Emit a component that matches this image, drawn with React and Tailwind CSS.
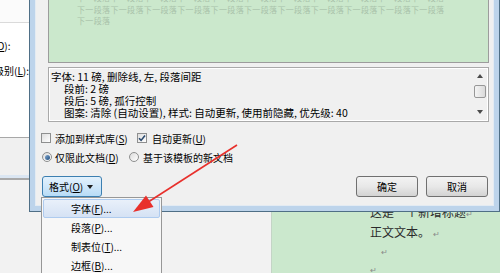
import React from 'react';

const FONT = "font-['Noto_Sans_CJK_SC','Noto_Sans',sans-serif]";

const U = ({ children }) => <span className="underline underline-offset-1">{children}</span>;

const Check = ({ checked }) => (
    <span className="w-[10px] h-[10px] border border-[#8e8f8f] bg-gradient-to-br from-[#dedede] to-white flex items-center justify-center shrink-0">
        {checked && (
            <svg width="8" height="8" viewBox="0 0 8 8">
                <path d="M1 4.2 L3.1 6.4 L7 1.4" fill="none" stroke="#2b4a6e" strokeWidth="1.6" />
            </svg>
        )}
    </span>
);

const Radio = ({ checked }) => (
    <span className="w-[10px] h-[10px] rounded-full border border-[#8e8f8f] bg-gradient-to-br from-[#dcdcdc] to-white flex items-center justify-center shrink-0">
        {checked && <span className="w-[5px] h-[5px] rounded-full bg-gradient-to-br from-[#7fa6cf] to-[#23507f]" />}
    </span>
);

const previewLine = '下一段落'.repeat(11);

const App = () => {
    return (
        <div className={`relative w-[500px] h-[273px] overflow-hidden bg-[#f1f1f1] ${FONT} text-black`}>
            {/* background: style pane + document page */}
            <div className="flex h-full">
                <div className="w-[271px] flex flex-col">
                    <div className="h-[23px] bg-[#fbfbfb] border-b border-[#dadada]" />
                    <div className="h-[115px] bg-white border-b border-[#a8a8a8] text-[10px] leading-[12px] pt-[17px]">
                        <div className="-ml-[6px] whitespace-nowrap">(<U>D</U>):</div>
                        <div className="-ml-[6px] mt-[13px] whitespace-nowrap">级别(<U>L</U>):</div>
                    </div>
                    <div className="h-[37px] bg-[#f0f0f0]" />
                    <div className="h-[3px] bg-[#dbe6f2]" />
                    <div className="h-[2px] bg-[#a9a9a9]" />
                    <div className="flex-1 bg-[#f2f2f2]" />
                </div>
                <div className="flex-1 bg-[#cbe8cd] border-l border-[#c4d4c6] pl-[98px] pt-[203px] text-[12px] leading-[18px] text-[#2a2a2a]">
                    <div className="whitespace-nowrap">这是一个新增标题<span className="text-[8px] text-[#8a8a8a]">↵</span></div>
                    <div className="whitespace-nowrap">正文文本。<span className="text-[8px] text-[#8a8a8a] ml-[3px]">↵</span></div>
                    <div className="pl-[11px] text-[8px] text-[#8a8a8a]">↵</div>
                    <div className="text-[8px] text-[#8a8a8a]">↵</div>
                </div>
            </div>

            {/* style dialog window */}
            <div className="absolute left-[29px] top-0 w-[471px] h-[212px] border-x border-b border-[#4f6f86] bg-[#bdd4eb] px-[5px] pb-[5px]">
                <div className="h-full border-x border-b border-[#e3ebf3] bg-[#f0f0f0] flex flex-col">
                    {/* preview */}
                    <div className="ml-[12px] w-[441px] h-[63px] bg-[#cbe8cc] border-x border-b border-[#9c9c9c] overflow-hidden">
                        <div className="-mt-[8px] pl-[28px] text-[8px] leading-[11.5px] tracking-[0.35px] text-[#a9c2aa] whitespace-nowrap">
                            <div>{previewLine}</div>
                            <div>{previewLine}</div>
                            <div>下一段落</div>
                        </div>
                    </div>

                    {/* description */}
                    <div className="ml-[12px] mt-[4px] w-[441px] h-[55px] border border-[#a9a9a9]">
                        <div className="h-full border border-white flex">
                            <div className="flex-1 pl-[1px] pt-[2px] text-[10.5px] leading-[12px] whitespace-nowrap">
                                <div>字体: 11 磅, 删除线, 左, 段落间距</div>
                                <div className="pl-[13px]">段前: 2 磅</div>
                                <div className="pl-[13px]">段后: 5 磅, 孤行控制</div>
                                <div className="pl-[13px]">图案: 清除 (自动设置), 样式: 自动更新, 使用前隐藏, 优先级: 40</div>
                            </div>
                            <div className="w-[13px] mr-[1px] flex flex-col items-center">
                                <span className="mt-[5px] w-0 h-0 border-x-[3px] border-x-transparent border-b-[4px] border-b-[#4a4a4a]" />
                                <span className="mt-[7px] w-[12px] h-[13px] rounded-[2px] border border-[#979797] bg-gradient-to-r from-[#f4f4f4] to-[#dadada]" />
                                <span className="mt-[12px] w-0 h-0 border-x-[3px] border-x-transparent border-t-[4px] border-t-[#4a4a4a]" />
                            </div>
                        </div>
                    </div>

                    {/* checkboxes */}
                    <div className="mt-[9px] pl-[5px] h-[14px] flex items-center text-[10px] whitespace-nowrap">
                        <div className="w-[96px] flex items-center gap-[4px]">
                            <Check />
                            <span>添加到样式库(<U>S</U>)</span>
                        </div>
                        <div className="flex items-center gap-[5px]">
                            <Check checked />
                            <span>自动更新(<U>U</U>)</span>
                        </div>
                    </div>

                    {/* radios */}
                    <div className="mt-[5px] pl-[6px] h-[14px] flex items-center text-[10px] whitespace-nowrap">
                        <div className="w-[87px] flex items-center gap-[3px]">
                            <Radio checked />
                            <span>仅限此文档(<U>D</U>)</span>
                        </div>
                        <div className="flex items-center gap-[4px]">
                            <Radio />
                            <span>基于该模板的新文档</span>
                        </div>
                    </div>

                    {/* buttons */}
                    <div className="mt-[12px] pl-[6px] pr-[5px] flex items-start text-[10px]">
                        <div className="w-[60px] h-[21px] rounded-[3px] border border-[#3c7fb1] bg-gradient-to-b from-[#e3f1fc] via-[#cfe7fa] to-[#b8dcf6] flex items-center pl-[6px] gap-[4px] whitespace-nowrap">
                            <span>格式(<U>O</U>)</span>
                            <span className="w-0 h-0 border-x-[3px] border-x-transparent border-t-[4px] border-t-[#1e1e1e]" />
                        </div>
                        <div className="ml-auto flex gap-[8px]">
                            <div className="w-[62px] h-[21px] rounded-[3px] border border-[#707070] bg-gradient-to-b from-[#f3f3f3] via-[#e8e8e8] to-[#d3d3d3] flex items-center justify-center">确定</div>
                            <div className="w-[62px] h-[21px] rounded-[3px] border border-[#707070] bg-gradient-to-b from-[#f3f3f3] via-[#e8e8e8] to-[#d3d3d3] flex items-center justify-center">取消</div>
                        </div>
                    </div>
                </div>
            </div>

            {/* format dropdown menu */}
            <div className="absolute left-[41px] top-[197px] w-[121px] h-[82px] border border-[#979797] bg-[#f7f7f7] pt-[1px] px-[1px] text-[10px] leading-[17px]">
                <div className="h-[19px] rounded-[2px] border border-[#aecbef] bg-gradient-to-b from-[#e9f0fa] to-[#d5e2f4] pl-[27px]">字体(<U>F</U>)...</div>
                <div className="h-[19px] pl-[28px] pt-[1px]">段落(<U>P</U>)...</div>
                <div className="h-[19px] pl-[28px] pt-[1px]">制表位(<U>T</U>)...</div>
                <div className="h-[19px] pl-[28px] pt-[1px]">边框(<U>B</U>)...</div>
            </div>

            {/* red annotation arrow */}
            <svg className="absolute inset-0 pointer-events-none" width="500" height="273" viewBox="0 0 500 273">
                <line x1="237" y1="145" x2="149" y2="201.5" stroke="#e8302c" strokeWidth="1.6" />
                <polygon points="133,212 153.5,207 146,195.5" fill="#e8302c" />
            </svg>
        </div>
    );
};

export default App;
